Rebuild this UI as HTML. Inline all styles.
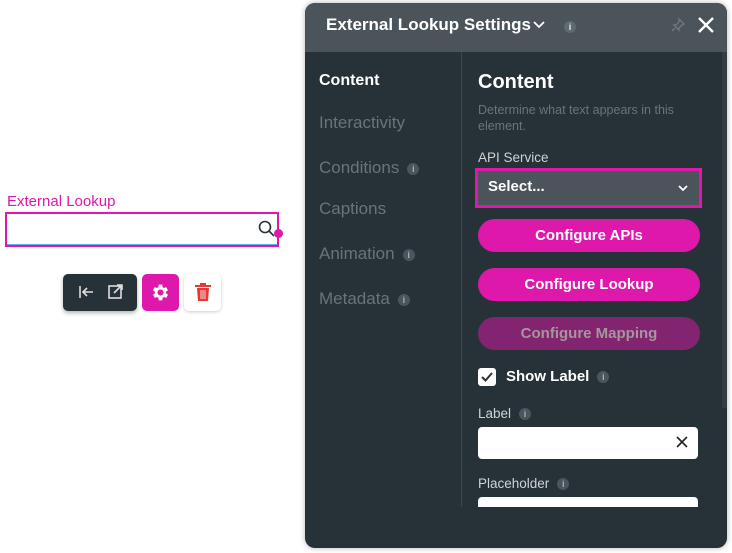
<!DOCTYPE html>
<html><head><style>
*{margin:0;padding:0;box-sizing:border-box}
body{width:732px;height:553px;background:#fff;font-family:"Liberation Sans",sans-serif;position:relative;overflow:hidden}
.a{position:absolute}
.nav{position:absolute;left:319px;font-size:17px;color:#6b7378}
.i{display:inline-block;width:12px;height:12px;border-radius:50%;background:#4b555b;color:#aab;font-size:9px;text-align:center;line-height:12px;font-weight:bold;vertical-align:middle;margin-left:8px}
.btn{position:absolute;left:478px;width:222px;height:33px;border-radius:17px;background:#dd18aa;color:#fff;font-size:15px;font-weight:bold;text-align:center;line-height:33px}
</style></head><body>
<div class="a" style="left:7px;top:193px;color:#dd18aa;font-size:15px">External Lookup</div>
<div class="a" style="left:5px;top:212px;width:274px;height:35px;border:2px solid #dd18aa;background:#fff"></div>
<div class="a" style="left:7px;top:244px;width:270px;height:1px;background:#5ab0f0"></div>
<svg class="a" style="left:257px;top:219px" width="20" height="20"><circle cx="8" cy="8" r="5.5" fill="none" stroke="#263238" stroke-width="1.6"/><line x1="12" y1="12" x2="17" y2="17" stroke="#263238" stroke-width="1.6"/></svg>
<div class="a" style="left:274px;top:229px;width:9px;height:9px;border-radius:50%;background:#dd18aa"></div>
<div class="a" style="left:63px;top:274px;width:74px;height:37px;border-radius:5px;background:#263238;box-shadow:0 2px 4px rgba(0,0,0,.3)"></div>
<svg class="a" style="left:76px;top:283px" width="54" height="18"><line x1="4" y1="3" x2="4" y2="15" stroke="#ddd" stroke-width="1.6"/><path d="M7 9h10M11 5l-4 4 4 4" stroke="#ddd" stroke-width="1.6" fill="none"/><rect x="33" y="3" width="12" height="12" fill="none" stroke="#ddd" stroke-width="1.6"/><path d="M38 10l8-8M41 2h5v5" stroke="#ddd" stroke-width="1.6" fill="none"/></svg>
<div class="a" style="left:142px;top:274px;width:37px;height:37px;border-radius:5px;background:#dd18aa"></div>
<svg class="a" style="left:150px;top:282px" width="21" height="21" viewBox="0 0 24 24"><path fill="#fff" d="M19.4 13a7.5 7.5 0 000-2l2.1-1.6-2-3.5-2.5 1a7 7 0 00-1.7-1L15 3h-4l-.4 2.9a7 7 0 00-1.7 1l-2.5-1-2 3.5L6.6 11a7.5 7.5 0 000 2l-2.1 1.6 2 3.5 2.5-1a7 7 0 001.7 1L11 21h4l.4-2.9a7 7 0 001.7-1l2.5 1 2-3.5zM13 15.5a3.5 3.5 0 110-7 3.5 3.5 0 010 7z" transform="translate(-1 0)"/></svg>
<div class="a" style="left:184px;top:274px;width:37px;height:37px;border-radius:5px;background:#fff;box-shadow:0 1px 3px rgba(0,0,0,.2)"></div>
<svg class="a" style="left:194px;top:282px" width="18" height="20"><rect x="1" y="3" width="16" height="2" fill="#e53935"/><rect x="6" y="1" width="6" height="2" fill="#e53935"/><path d="M3 6h12l-1 13H4z" fill="#e53935"/><path d="M7 8v9M9 8v9M11 8v9" stroke="#fff" stroke-width=".8"/></svg>

<div class="a" style="left:305px;top:3px;width:422px;height:545px;border-radius:10px;background:#263238;overflow:hidden;box-shadow:0 0 6px rgba(0,0,0,.3)">
<div class="a" style="left:0;top:0;width:422px;height:49px;background:#4a545a"></div>
</div>
<div class="a" style="left:326px;top:15px;color:#fff;font-size:17px;font-weight:bold;white-space:nowrap">External Lookup Settings</div>
<svg class="a" style="left:532px;top:20px" width="14" height="10"><path d="M2 2l5 5 5-5" stroke="#fff" stroke-width="1.8" fill="none"/></svg>
<div class="a" style="left:556px;top:18px"><span class="i" style="background:#5f696e;color:#cfd">i</span></div>
<svg class="a" style="left:670px;top:17px" width="16" height="16"><path d="M9 2l5 5-2 1-3 3 0 2-5-5 2 0 3-3z M5 11l-3 3" stroke="#6e777c" stroke-width="1.4" fill="none"/></svg>
<svg class="a" style="left:697px;top:16px" width="18" height="18"><path d="M2 2l14 14M16 2L2 16" stroke="#fff" stroke-width="2.4"/></svg>
<div class="a" style="left:461px;top:52px;width:1px;height:455px;background:#3d474c"></div>
<div class="a" style="left:722px;top:52px;width:5px;height:356px;background:#333d42"></div>
<div class="nav" style="top:72px;color:#fff;font-weight:bold;font-size:16px">Content</div>
<div class="nav" style="top:113px">Interactivity</div>
<div class="nav" style="top:158px">Conditions<span class="i">i</span></div>
<div class="nav" style="top:199px">Captions</div>
<div class="nav" style="top:244px">Animation<span class="i">i</span></div>
<div class="nav" style="top:289px">Metadata<span class="i">i</span></div>
<div class="a" style="left:478px;top:71px;color:#fff;font-size:20px;font-weight:bold">Content</div>
<div class="a" style="left:478px;top:102px;color:#6b7378;font-size:12.5px;line-height:16px;width:220px">Determine what text appears in this element.</div>
<div class="a" style="left:478px;top:150px;color:#cfd3d5;font-size:13.5px">API Service</div>
<div class="a" style="left:475px;top:168px;width:227px;height:40px;border:3px solid #dd18aa;background:#4a545a"></div>
<div class="a" style="left:488px;top:178px;color:#fff;font-size:15px;font-weight:bold">Select...</div>
<svg class="a" style="left:677px;top:183px" width="12" height="10"><path d="M2 3l4 4 4-4" stroke="#fff" stroke-width="1.8" fill="none"/></svg>
<div class="btn" style="top:219px">Configure APIs</div>
<div class="btn" style="top:268px">Configure Lookup</div>
<div class="btn" style="top:317px;background:#832470;color:#a5959f">Configure Mapping</div>
<div class="a" style="left:478px;top:368px;width:18px;height:18px;border-radius:3px;background:#fff"></div>
<svg class="a" style="left:478px;top:368px" width="18" height="18"><path d="M4 9l3.5 3.5L14 5" stroke="#333" stroke-width="2" fill="none"/></svg>
<div class="a" style="left:506px;top:368px;color:#fff;font-size:15px;font-weight:bold">Show Label<span class="i">i</span></div>
<div class="a" style="left:478px;top:406px;color:#cfd3d5;font-size:13.5px">Label<span class="i">i</span></div>
<div class="a" style="left:478px;top:427px;width:220px;height:32px;border-radius:4px;background:#fff"></div>
<svg class="a" style="left:676px;top:436px" width="12" height="12"><path d="M1 1l10 10M11 1L1 11" stroke="#222" stroke-width="1.6"/></svg>
<div class="a" style="left:478px;top:476px;color:#cfd3d5;font-size:13.5px">Placeholder<span class="i">i</span></div>
<div class="a" style="left:478px;top:497px;width:220px;height:10px;border-radius:4px 4px 0 0;background:#fff"></div>
</body></html>
